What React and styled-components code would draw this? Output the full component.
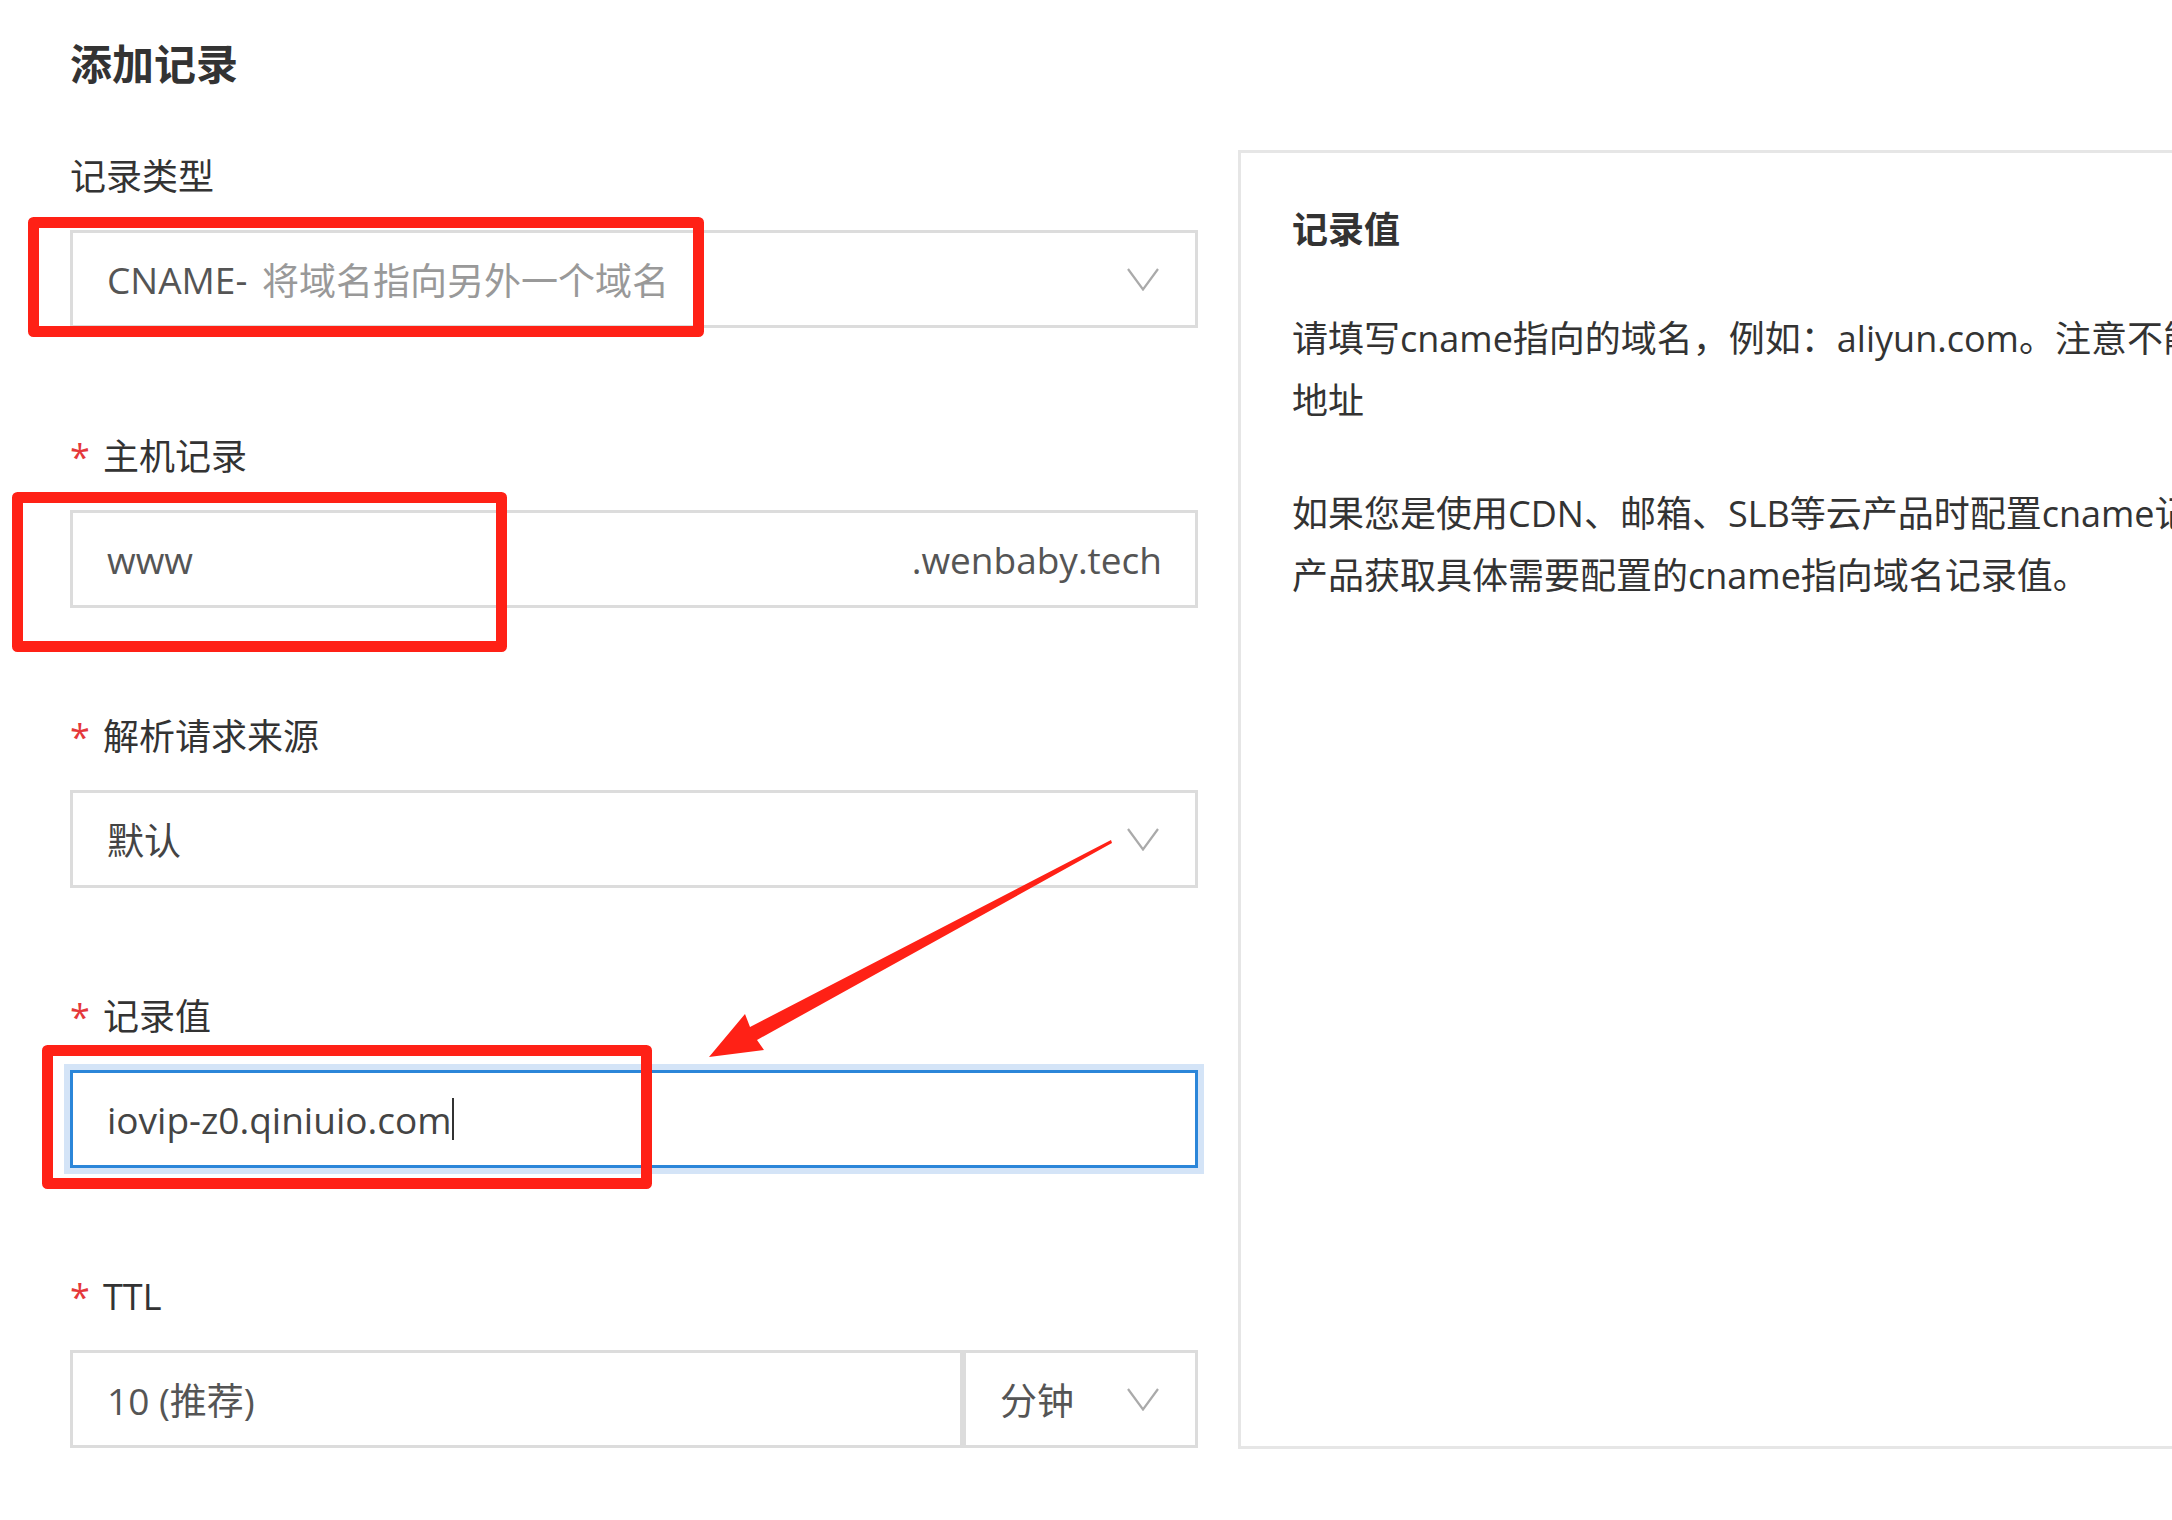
import React from "react";
import styled, { createGlobalStyle } from "styled-components";

const GlobalStyle = createGlobalStyle`
  html, body { margin: 0; padding: 0; background: #fff; }
  body {
    font-family: "Open Sans", "Noto Sans CJK SC", sans-serif;
    color: #333;
    overflow: hidden;
  }
`;

const Page = styled.div`
  position: relative;
  width: 2172px;
  height: 1520px;
  overflow: hidden;
  box-sizing: border-box;
  padding-left: 70px;
  display: flex;
  align-items: flex-start;
  gap: 40px;
`;

const LeftCol = styled.div`
  width: 1128px;
  flex-shrink: 0;
  display: flex;
  flex-direction: column;
`;

const Title = styled.h1`
  margin: 35px 0 0;
  font-size: 42px;
  line-height: 58px;
  font-weight: 700;
  color: #333;
`;

const Form = styled.div`
  display: flex;
  flex-direction: column;
  gap: 103px;
  margin-top: 58px;
`;

const Item = styled.div`
  display: flex;
  flex-direction: column;
  gap: 27px;
`;

const Label = styled.div`
  font-size: 36px;
  line-height: 52px;
  height: 52px;
  color: #333;
  white-space: nowrap;
`;

const Required = styled.span`
  display: inline-block;
  width: 33px;
  color: #e5383b;
`;

const Field = styled.div`
  box-sizing: border-box;
  height: 98px;
  flex-shrink: 0;
  border: 3px solid ${(p) => (p.$focused ? "#2b86d9" : "#dcdcdc")};
  box-shadow: ${(p) => (p.$focused ? "0 0 0 6px #d4e4f7" : "none")};
  background: #fff;
  display: flex;
  align-items: center;
  padding: 0 36px 0 34px;
  font-size: 37px;
  color: #555;
  ${(p) => (p.$grow ? "flex: 1 1 auto;" : "")}
  ${(p) => (p.$width ? `width: ${p.$width}px;` : "")}
`;

const Row = styled.div`
  display: flex;
`;

const Value = styled.span`
  flex: 1;
  display: flex;
  align-items: center;
  white-space: nowrap;
  color: ${(p) => (p.$dark ? "#444" : "#555")};
`;

const Muted = styled.span`
  color: #999;
  margin-left: 0.4em;
`;

const Suffix = styled.span`
  color: #555;
  margin-right: -3px;
  white-space: nowrap;
`;

const Caret = styled.span`
  display: inline-block;
  width: 2px;
  height: 42px;
  background: #333;
  margin-left: 1px;
`;

const ChevronSvg = styled.svg`
  flex-shrink: 0;
  display: block;
`;

const Panel = styled.aside`
  flex-shrink: 0;
  width: 1100px;
  height: 1299px;
  margin-top: 150px;
  box-sizing: border-box;
  border: 3px solid #e6e6e6;
  padding: 52px 0 0 51px;
  overflow: hidden;
`;

const PanelTitle = styled.h2`
  margin: 0 0 53px;
  font-size: 36px;
  line-height: 50px;
  font-weight: 700;
  color: #333;
`;

const PanelText = styled.p`
  margin: 0 0 51px;
  font-size: 36px;
  line-height: 62px;
  color: #333;
  white-space: nowrap;
`;

const Overlay = styled.svg`
  position: absolute;
  left: 0;
  top: 0;
  pointer-events: none;
`;

const Chevron = () => (
  <ChevronSvg width="32" height="23" viewBox="0 0 32 23">
    <polyline
      points="1,1 16,21.5 31,1"
      fill="none"
      stroke="#aaa"
      strokeWidth="2.2"
      strokeLinejoin="miter"
    />
  </ChevronSvg>
);

const RED = "#ff2116";

export default function App() {
  return (
    <>
      <GlobalStyle />
      <Page>
        <LeftCol>
          <Title>添加记录</Title>
          <Form>
            <Item>
              <Label>记录类型</Label>
              <Field>
                <Value>
                  CNAME-<Muted>将域名指向另外一个域名</Muted>
                </Value>
                <Chevron />
              </Field>
            </Item>
            <Item>
              <Label>
                <Required>*</Required>主机记录
              </Label>
              <Field>
                <Value>www</Value>
                <Suffix>.wenbaby.tech</Suffix>
              </Field>
            </Item>
            <Item>
              <Label>
                <Required>*</Required>解析请求来源
              </Label>
              <Field>
                <Value $dark>默认</Value>
                <Chevron />
              </Field>
            </Item>
            <Item>
              <Label>
                <Required>*</Required>记录值
              </Label>
              <Field $focused>
                <Value $dark>
                  iovip-z0.qiniuio.com
                  <Caret />
                </Value>
              </Field>
            </Item>
            <Item>
              <Label>
                <Required>*</Required>TTL
              </Label>
              <Row>
                <Field $grow>
                  <Value>10 (推荐)</Value>
                </Field>
                <Field $width={235}>
                  <Value>分钟</Value>
                  <Chevron />
                </Field>
              </Row>
            </Item>
          </Form>
        </LeftCol>
        <Panel>
          <PanelTitle>记录值</PanelTitle>
          <PanelText>
            请填写cname指向的域名，例如：aliyun.com。注意不能填写IP
            <br />
            地址
          </PanelText>
          <PanelText>
            如果您是使用CDN、邮箱、SLB等云产品时配置cname记录，请到对应
            <br />
            产品获取具体需要配置的cname指向域名记录值。
          </PanelText>
        </Panel>
        <Overlay width="2172" height="1520" viewBox="0 0 2172 1520">
          <g fill="none" stroke={RED} strokeWidth="11" strokeLinejoin="round">
            <rect x="33.5" y="222.5" width="665" height="109" />
            <rect x="17.5" y="497.5" width="484" height="149" />
            <rect x="47.5" y="1050.5" width="599" height="133" />
          </g>
          <polygon
            fill={RED}
            points="1111,840 1112,843 757,1040 764,1050 709,1057 745,1014 750,1027"
          />
        </Overlay>
      </Page>
    </>
  );
}
